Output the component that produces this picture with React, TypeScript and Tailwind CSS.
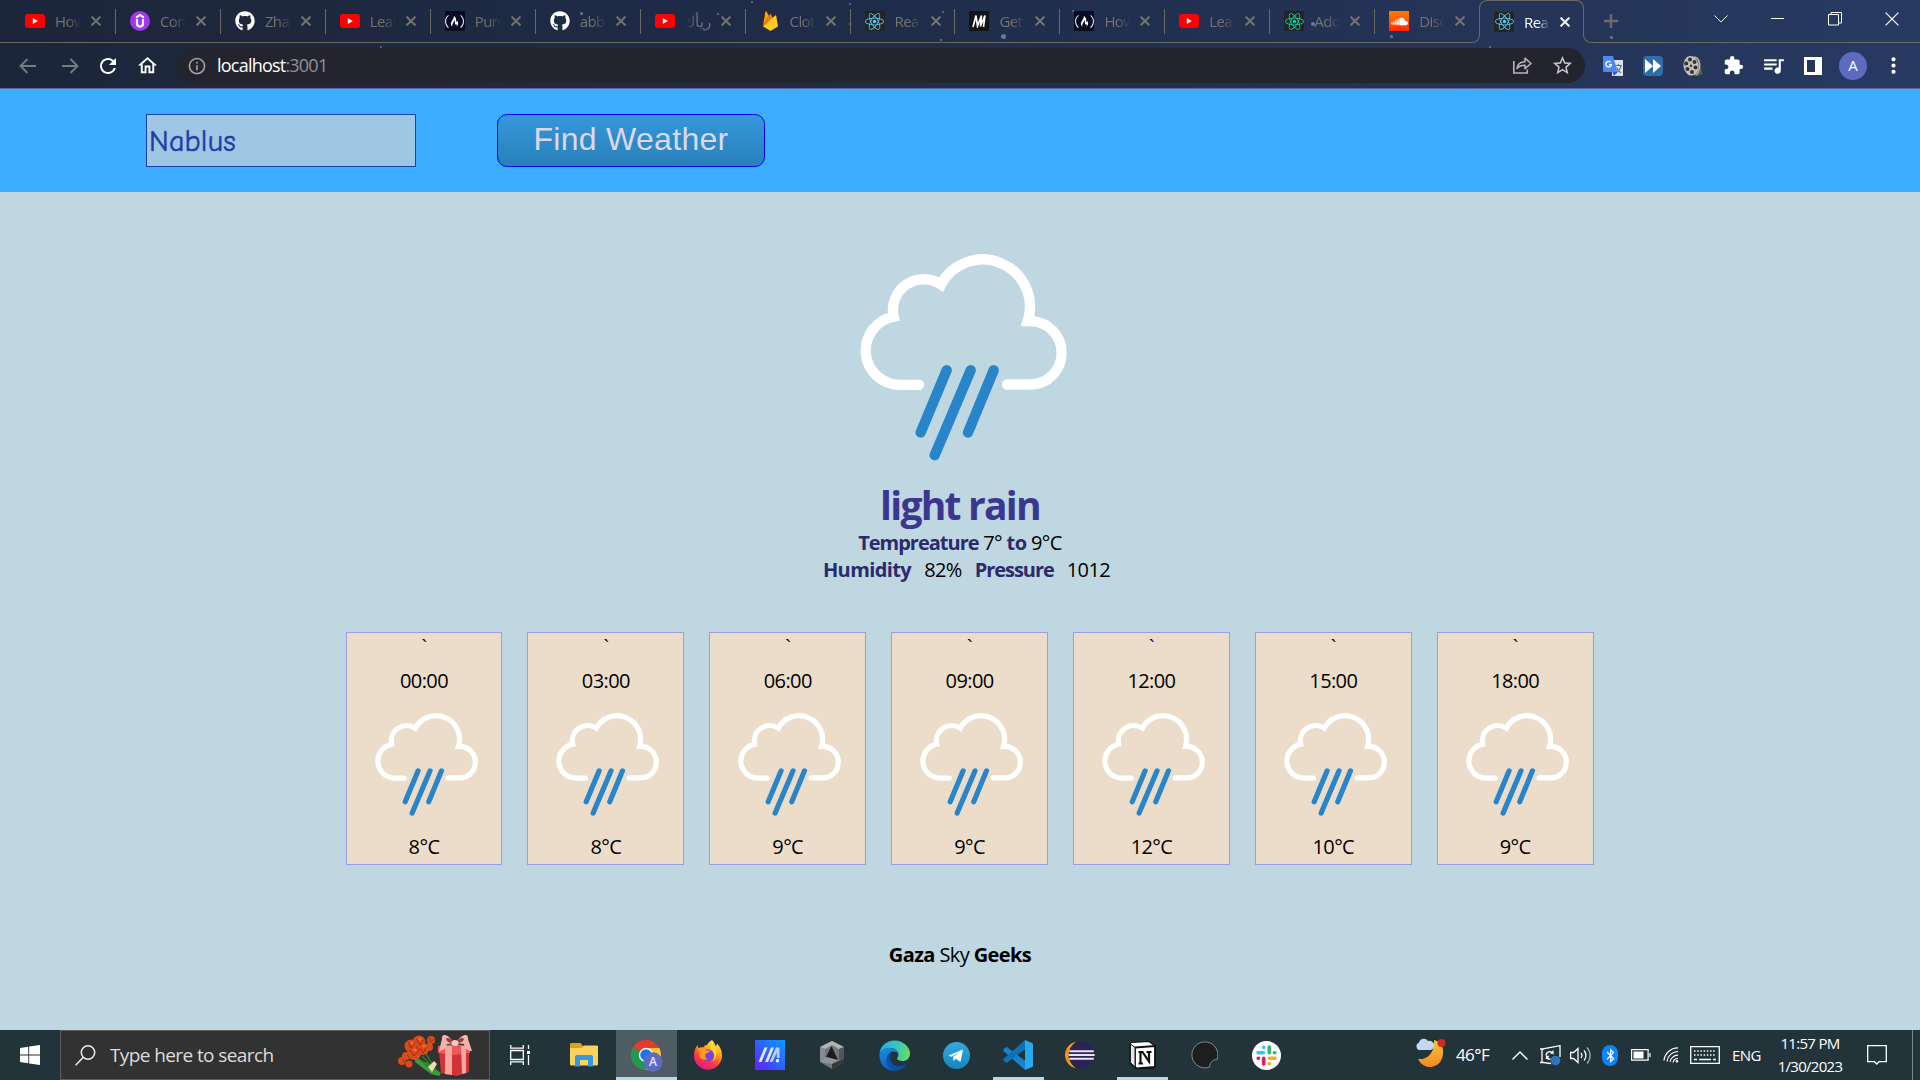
import React from "react";
import { FaGithub, FaReact, FaSoundcloud, FaFreeCodeCamp, FaBluetoothB } from "react-icons/fa";
import { MdRefresh, MdOutlineHome, MdExtension, MdQueueMusic, MdStarBorder, MdMoreVert, MdInfoOutline } from "react-icons/md";

const YouTube = () => (
  <svg width="20" height="20" viewBox="0 0 20 20">
    <rect x="0" y="3" width="20" height="14" rx="3.2" fill="#ff0000" />
    <path d="M7.8 7v6l5-3z" fill="#fff" />
  </svg>
);

const Udemy = () => (
  <span className="flex h-5 w-5 items-center justify-center rounded-full bg-[#a435f0]">
    <svg width="12" height="16" viewBox="0 0 12 16" fill="none" stroke="#fff">
      <path d="M2 4.6L6 2l4 2.6" strokeWidth="1.9" />
      <path d="M3 6v4.6a3 3 0 0 0 6 0V6" strokeWidth="2.2" />
    </svg>
  </span>
);

const GitHub = () => <FaGithub size={20} color="#fff" />;

const FreeCode = () => (
  <span className="flex h-5 w-5 items-center justify-center bg-[#0a0a23]">
    <FaFreeCodeCamp size={19} color="#fff" />
  </span>
);

const Firebase = () => (
  <svg width="20" height="20" viewBox="0 0 20 20">
    <path d="M3 15.500L5.300.7c.1-.6.800-.7 1.100-.2L9 5z" fill="#ffa000" />
    <path d="M3 15.500L10 3.200c.2-.4.700-.4 1 0l2 4z" fill="#f57c00" />
    <path d="M3 15.500L15.200 4.500c.3-.3.900-.1 1 .3L18 15.600l-6.600 3.800c-.5.300-1.100.3-1.600 0z" fill="#ffca28" />
  </svg>
);

const ReactTile = ({ green }: { green?: boolean }) => (
  <span className="flex h-5 w-5 items-center justify-center bg-[#222427]">
    <FaReact size={19} color={green ? "#14d09c" : "#61c9e6"} />
  </span>
);

const Mui = () => (
  <span className="flex h-5 w-5 items-center justify-center bg-[#141416]">
    <svg width="16" height="14" viewBox="0 0 16 14" fill="none" stroke="#fff" strokeWidth="1.700">
      <path d="M2 13L5 1.500 6.500 12 10.500 1.500 9.500 12.500M9.500 12L14 1.500 12.500 13" />
    </svg>
  </span>
);

const SoundCloud = () => (
  <span className="flex h-5 w-5 items-center justify-center bg-gradient-to-b from-[#ff7a00] to-[#ff2200]">
    <FaSoundcloud size={17} color="#fff" />
  </span>
);

const tabs: { icon: React.ReactNode; title: string; rtl?: boolean }[] = [
  { icon: <YouTube />, title: "How" },
  { icon: <Udemy />, title: "Com" },
  { icon: <GitHub />, title: "Zha" },
  { icon: <YouTube />, title: "Lear" },
  { icon: <FreeCode />, title: "Pure" },
  { icon: <GitHub />, title: "abb" },
  { icon: <YouTube />, title: "ريأك", rtl: true },
  { icon: <Firebase />, title: "Clot" },
  { icon: <ReactTile />, title: "Rea" },
  { icon: <Mui />, title: "Gett" },
  { icon: <FreeCode />, title: "How" },
  { icon: <YouTube />, title: "Lear" },
  { icon: <ReactTile green />, title: "Add" },
  { icon: <SoundCloud />, title: "Disc" },
];

const Cross = ({ color, w = 10, sw = 2 }: { color: string; w?: number; sw?: number }) => (
  <svg width={w} height={w} viewBox={`0 0 ${w} ${w}`} stroke={color} strokeWidth={sw}>
    <path d={`M.6 .6L${w - 0.6} ${w - 0.6}M${w - 0.6} .6L.6 ${w - 0.6}`} />
  </svg>
);

function TabBody({ icon, title, rtl, active }: { icon: React.ReactNode; title: string; rtl?: boolean; active?: boolean }) {
  return (
    <>
      <span className="h-5 w-5 shrink-0">{icon}</span>
      <span
        dir={rtl ? "rtl" : "ltr"}
        className={
          "ml-2.5 h-6 w-[26px] shrink-0 overflow-hidden whitespace-nowrap text-[15px] leading-6 tracking-[-0.6px] " +
          (rtl
            ? "[mask-image:linear-gradient(to_left,black_50%,transparent)] "
            : "[mask-image:linear-gradient(to_right,black_50%,transparent)] ") +
          (active ? "text-white" : "text-[#75736f]")
        }
      >
        {title}
      </span>
      <span className="ml-[9px] flex w-3 shrink-0 items-center justify-center">
        <Cross color={active ? "#f2f2f2" : "#75736f"} />
      </span>
    </>
  );
}

const stars = [
  [581, 13, 3], [752, 2, 2], [850, 4, 2], [943, 12, 2], [1003, 36, 5], [941, 40, 2], [1313, 24, 4], [1391, 36, 3],
  [1611, 37, 3], [718, 14, 2], [1073, 11, 2], [381, 47, 2], [1490, 47, 2], [850, 24, 2],
];

function Browser() {
  return (
    <div className="relative h-[89px] shrink-0 bg-gradient-to-r from-[#1c263a] via-[#202d4b] to-[#283a62]">
      {stars.map(([x, y, s], i) => (
        <span key={i} className="absolute rounded-full bg-[#8fa6da] opacity-60" style={{ left: x - s / 2, top: y - s / 2, width: s, height: s }} />
      ))}
      <div className="relative flex h-[43px]">
        <div className="flex w-[1472px] shrink-0 border-b border-[#6b6963]">
          {tabs.map((t, i) => (
            <div key={i} className="relative flex h-[42px] w-[104.95px] shrink-0 items-center pl-[25px]">
              <TabBody {...t} />
              {i < 13 && <span className="absolute -right-[11px] top-[9px] h-[25px] w-px bg-[#6b6963]" />}
            </div>
          ))}
        </div>
        <div className="h-2 w-2 shrink-0 self-end rounded-br-lg border-b border-r border-[#6b6963]" />
        <div className="-ml-px mb-2 flex w-[105px] shrink-0 items-center rounded-t-lg border-x border-t border-[#6b6963] pl-[14px] pt-[7px]">
          <TabBody icon={<ReactTile />} title="Rea" active />
        </div>
        <div className="-ml-px h-2 w-2 shrink-0 self-end rounded-bl-lg border-b border-l border-[#6b6963]" />
        <div className="flex flex-1 border-b border-[#6b6963]">
          <svg width="14" height="14" viewBox="0 0 14 14" className="ml-[13px] mt-[14px] shrink-0" stroke="#6e6b66" strokeWidth="2.400">
            <path d="M7 0v14M0 7h14" />
          </svg>
          <div className="ml-auto flex h-[37px] items-center text-white">
            <span className="flex w-[57px] justify-center">
              <svg width="14" height="8" viewBox="0 0 14 8" fill="none" stroke="#fff"><path d="M.5.5L7 7 13.500.5" /></svg>
            </span>
            <span className="flex w-[57px] justify-center"><span className="h-px w-[13px] bg-white" /></span>
            <span className="flex w-[57px] justify-center">
              <svg width="14" height="14" viewBox="0 0 14 14" fill="none" stroke="#fff">
                <path d="M.5 2.500h10v10.500H.5zM3 2.500V.5h10.500V11h-3" />
              </svg>
            </span>
            <span className="flex w-[57px] justify-center"><Cross color="#fff" w={14} sw={1.2} /></span>
          </div>
        </div>
      </div>
      <div className="relative flex h-[45px] items-center pl-[18px] text-white">
        <span className="flex w-10 pl-px text-[#777c87]"><Arrow /></span>
        <span className="flex w-10 rotate-180 justify-end pr-[4px] text-[#777c87]"><Arrow /></span>
        <span className="flex w-10 justify-start"><MdRefresh size={24} className="-ml-0.5" /></span>
        <span className="flex w-[38px]"><MdOutlineHome size={23} className="-ml-0.5" /></span>
        <div className="flex h-[35px] w-[1409px] items-center rounded-full bg-[#24242e] pl-[11px]">
          <MdInfoOutline size={20} color="#a0a0a4" />
          <span className="-mt-0.5 ml-2.5 text-[18px] leading-6 tracking-[-0.78px]">localhost<span className="text-[#919196]">:3001</span></span>
          <svg width="19" height="17" viewBox="0 0 19 17" fill="none" stroke="#b5b5b8" strokeWidth="1.600" className="ml-auto mr-[19px]">
            <path d="M.8 4v12h13.500v-3.500" />
            <path d="M4 11.500C4.500 7 7.500 4.800 12 4.700V1.200l6 5.300-6 5.200V8.300C8.500 8.200 6 9.200 4 11.500z" strokeLinejoin="round" />
          </svg>
          <MdStarBorder size={23} color="#c6c6c8" className="mr-[11px]" />
        </div>
        <div className="ml-[8px] flex">
          <Cell>
            <svg width="22" height="22" viewBox="0 0 22 22">
              <rect x="10" y="5" width="11" height="16" fill="#dfe3e8" />
              <path d="M13 10.500h7M16.500 9v1.500M14 18c3-2 4.500-4.500 4.800-7.500M14.500 12.500c1 2.500 2.500 4.300 4.500 5.500" stroke="#5c7480" strokeWidth="1.200" fill="none" />
              <path d="M1 1h10l4.500 16H1.500A1 1 0 0 1 1 16z" fill="#4a8af4" />
              <path d="M10.500 17h5l-3.500 4z" fill="#3056c9" />
              <path d="M8.800 7.400a2.800 2.800 0 1 0 .6 2.200H7" stroke="#fff" strokeWidth="1.300" fill="none" />
            </svg>
          </Cell>
          <Cell>
            <span className="flex h-5 w-5 items-center justify-center rounded-sm bg-[#2e6da6]">
              <svg width="16" height="14" viewBox="0 0 16 14" fill="#fff"><path d="M0 0l8 7-8 7zM8 0l8 7-8 7z" /></svg>
            </span>
          </Cell>
          <Cell>
            <svg width="22" height="22" viewBox="0 0 22 22">
              <path d="M11 1c6 0 8 4 8 10 0 4 1 7 2 8l-6 2-5-1z" fill="#5b5956" />
              <path d="M12 2c4 1 6 5 5.500 10-.3 4-1.500 7-4 8" stroke="#b4b1ac" strokeWidth="1.500" fill="none" />
              <ellipse cx="9" cy="10.800" rx="7.500" ry="9.800" fill="#c2c0bc" transform="rotate(-8 9 10.800)" />
              <g fill="#35322f"><circle cx="8" cy="4.500" r="2" /><circle cx="4.200" cy="8.500" r="2" /><circle cx="12.500" cy="7" r="2" /><circle cx="5.500" cy="14" r="2" /><circle cx="10" cy="17" r="2" /><circle cx="13.500" cy="12.500" r="2" /><circle cx="9" cy="10.800" r="1.200" /></g>
            </svg>
          </Cell>
          <Cell><MdExtension size={21} /></Cell>
          <Cell><MdQueueMusic size={25} /></Cell>
          <Cell>
            <span className="flex h-[18px] w-[18px] justify-end bg-white p-[3px]"><span className="mr-1 h-3 w-2 bg-[#26365b]" /></span>
          </Cell>
          <Cell>
            <span className="flex h-7 w-7 shrink-0 items-center justify-center rounded-full bg-[#5c6bc0] text-[15px]">A</span>
          </Cell>
          <Cell><MdMoreVert size={25} /></Cell>
        </div>
      </div>
      <div className="relative h-px bg-[#5a6498]" />
    </div>
  );
}

const Arrow = () => (
  <svg width="17" height="16" viewBox="0 0 17 16" fill="none" stroke="currentColor" strokeWidth="1.800">
    <path d="M17 8H1.500M8.500 1L1.500 8l7 7" />
  </svg>
);

const Cell = ({ children }: { children: React.ReactNode }) => <span className="flex h-[45px] w-10 items-center justify-center">{children}</span>;

const RainCloud = ({ className }: { className: string }) => (
  <svg viewBox="180 73 621 620" className={className} fill="none" strokeWidth="31" strokeLinecap="round">
    <path d="M357 465H300A103 103 0 0 1 281 260.800A92.500 92.500 0 0 1 423 164A141.700 141.700 0 0 1 683 274H690A95 95 0 0 1 690 464H621" stroke="#fff" strokeMiterlimit="6" />
    <path d="M440 421L362 608M512 421L404 676M581 421L504 608" stroke="#2885ca" />
  </svg>
);

const hours = [
  ["00:00", "8"], ["03:00", "8"], ["06:00", "9"], ["09:00", "9"], ["12:00", "12"], ["15:00", "10"], ["18:00", "9"],
];

function WeatherPage() {
  return (
    <main className="flex h-[941px] shrink-0 flex-col bg-[#bed7e0]">
      <header className="flex h-[103px] shrink-0 items-start bg-[#3daeff] pl-[146px] pt-[25px]">
        <div className="h-[53px] w-[270px] border border-[#1c3faa] bg-[#9fc6e3] pl-[2px] font-['Comic_Sans_MS','Comic_Neue',Lato,sans-serif] text-[30px] leading-[53px] tracking-[0.2px] text-[#1c3faa] [-webkit-text-stroke:0.5px_#1c3faa]">
          Nablus
        </div>
        <button className="ml-[81px] h-[53px] w-[268px] rounded-[10px] border border-[#0000ff] bg-gradient-to-b from-[#3498db] to-[#2980b9] pb-1 text-center font-['Liberation_Sans',Arial,sans-serif] text-[32px] leading-[46px] tracking-[0.3px] text-[#dcd8e8]">
          Find Weather
        </button>
      </header>
      <section className="flex flex-col items-center text-[20px] leading-[27px] text-black">
        <RainCloud className="ml-[7px] mt-[62px] h-[207px] w-[207px]" />
        <h1 className="-mb-[3px] mt-[17px] text-[39px] font-bold leading-[54px] tracking-[-1.75px] text-[#3b3791]">light rain</h1>
        <p className="tracking-[-0.6px]">
          <b className="tracking-[-1px] text-[#2c2a6b]">Tempreature</b>&nbsp;7° <b className="text-[#2c2a6b]">to</b> 9°C
        </p>
        <p className="ml-[13px] flex tracking-[-0.6px]">
          <b className="text-[#2c2a6b]">Humidity</b>
          <span className="ml-[13px]">82%</span>
          <b className="ml-[13px] tracking-[-1.05px] text-[#2c2a6b]">Pressure</b>
          <span className="ml-[13px]">1012</span>
        </p>
      </section>
      <section className="ml-[345.6px] mt-[49px] grid w-[1248px] grid-cols-7 gap-[25px]">
        {hours.map(([time, temp]) => (
          <article key={time} className="flex h-[233px] flex-col items-center border border-[#9f9bdd] bg-[#ebddc9] text-[20px] leading-[27px] tracking-[-0.6px] text-black">
            <span className="h-[34px] leading-[27px]">`</span>
            <span>{time}</span>
            <RainCloud className="ml-[4px] mt-[19px] h-[103px] w-[103px]" />
            <span className="mt-[17px]">{temp}°C</span>
          </article>
        ))}
      </section>
      <footer className="mt-[76px] text-center text-[20px] leading-[27px] tracking-[-0.6px] text-black">
        <b>Gaza</b> Sky <b>Geeks</b>
      </footer>
    </main>
  );
}

const Flowers = () => (
  <svg width="75" height="42" viewBox="0 0 75 42">
    <path d="M17 23l12 6 14 10-2 3-8-2-16-12z" fill="#3f9c3b" />
    <path d="M20 24l14 12M24 22l13 14M28 20l10 16" stroke="#2c7a2a" strokeWidth="1.500" />
    <path d="M30 33l6-6 3 3-5 8z" fill="#e9dcae" />
    <g fill="#d94a1c">
      <circle cx="13" cy="12" r="6.500" /><circle cx="21" cy="8" r="6.500" /><circle cx="25" cy="15" r="6" /><circle cx="16" cy="19" r="7" />
      <circle cx="33" cy="6" r="4" /><circle cx="31" cy="13" r="4" /><circle cx="4" cy="27" r="4" /><circle cx="11" cy="30" r="3.500" /><circle cx="8" cy="22" r="4" />
    </g>
    <g stroke="#a62c0e" strokeWidth="1" fill="none">
      <path d="M10 8l3 6 4-5M18 5l4 6 3-5M12 16l4 6 5-6M22 14l3 5 3-5M31 4l2 4 3-3M5 25l2 4M9 21l3 3M18 12l3 4" />
    </g>
    <g fill="#f0733f"><circle cx="14" cy="9" r="1.500" /><circle cx="22" cy="5" r="1.500" /><circle cx="17" cy="16" r="1.500" /><circle cx="26" cy="12" r="1.300" /></g>
    <path d="M41 17l10 2h16l4-2v21l-12 4-16-3z" fill="#d33238" />
    <path d="M40 12l16-2 16 2v7l-16 2-16-2z" fill="#ea5a58" />
    <path d="M47 12h7v29l-7-1zM63 12h5v27l-4 1z" fill="#f7a5a0" />
    <path d="M56 9C50-1 43-1 44 5l-3 12c3 0 7-2 8-7zM58 9C64-1 71-1 70 5l4 12c-4 0-7-2-8-7z" fill="#f6b2ac" />
    <path d="M56 9c-3-5-7-6-8-4 1 3 4 4 8 4zM58 9c3-5 7-6 8-4-1 3-4 4-8 4z" fill="#93413d" />
    <ellipse cx="57" cy="9" rx="3.500" ry="3" fill="#fac7c2" />
  </svg>
);

const Chrome = () => (
  <svg width="32" height="32" viewBox="0 0 32 32">
    <circle cx="15" cy="15" r="15" fill="#e33b2e" />
    <path d="M15 15L2 7.500A15 15 0 0 0 15 30l6.500-11.300z" fill="#239a4a" />
    <path d="M15 8h13.300A15 15 0 0 1 15 30l6.500-11.300z" fill="#fcc934" />
    <circle cx="15" cy="15" r="7.200" fill="#fff" />
    <circle cx="15" cy="15" r="5.800" fill="#1a73e8" />
    <circle cx="22" cy="22" r="9.700" fill="#5c6bc0" />
    <text x="22" y="26.300" fontSize="12" fontWeight="600" fill="#e5e8fa" textAnchor="middle">A</text>
  </svg>
);

const Firefox = () => (
  <svg width="28" height="30" viewBox="0 0 28 30">
    <defs>
      <linearGradient id="ffx" x1=".8" y1="0" x2=".3" y2="1">
        <stop offset="0" stopColor="#fff44f" /><stop offset=".4" stopColor="#ff980e" /><stop offset=".7" stopColor="#ff3647" /><stop offset="1" stopColor="#e31587" />
      </linearGradient>
    </defs>
    <path d="M18 0c2 2 3 4 3.500 6 1-.5 1.500-1.500 1.500-2.500 3 3 5 7 5 12A14 14 0 0 1 0 16C0 12 1 8 3.500 5L4.500 8c1.500-1 3-1 4.500-.6C10.500 5.500 12 5 13 5c1-2 3-4 5-5z" fill="url(#ffx)" />
    <circle cx="14" cy="15.500" r="6" fill="#7a44e0" />
    <path d="M4 9c3-1 6 0 8 1.500h4c0 2-3 2-4 3-1.500 1.500-1 5 2 5.500-5 2-10-1-9-6z" fill="#ff9a1f" />
    <path d="M18 3c4 4 5.500 8 4 13-.5 3-2 4.500-3 5 2.500-5 1.500-9-1.500-11C16 8.500 16 5.500 18 3z" fill="#ffd63a" />
  </svg>
);

const MyAsus = () => (
  <svg width="30" height="30" viewBox="0 0 30 30">
    <defs><linearGradient id="asus" x1="1" y1="0" x2="0" y2="1"><stop offset="0" stopColor="#0a9bff" /><stop offset=".5" stopColor="#2c62ff" /><stop offset="1" stopColor="#6a1cff" /></linearGradient></defs>
    <path d="M0 0h30v30H0z" fill="url(#asus)" />
    <path d="M9.500 7.500h3L6.500 22h-3zM16 7.500h3L13 22h-3z" fill="#dfe9ff" />
    <path d="M21 7.500h3.500V18h-2.700v-5.500L17.500 22h-3z" fill="#b8ccff" /><circle cx="22.500" cy="20.700" r="1.700" fill="#fff" />
  </svg>
);

const Armoury = () => (
  <svg width="26" height="28" viewBox="0 0 26 28">
    <path d="M13 0l12 6v15l-12 7L1 21V6z" fill="#71777b" />
    <path d="M13 0l12 6-5 2-7-4-7 4-5-2z" fill="#aeb4b8" />
    <path d="M1 6l5 2v10l-5 3z" fill="#858b90" /><path d="M25 6l-5 2v10l5 3z" fill="#50565a" />
    <path d="M12.500 5l6.500 14-12-3z" fill="#191d20" /><path d="M7 16l12 3-6 4-12-2z" fill="#8f969a" /><path d="M13 28v-5l12-5v3z" fill="#34393c" />
  </svg>
);

const Edge = () => (
  <svg width="31" height="31" viewBox="0 0 31 31">
    <defs>
      <linearGradient id="eg1" x1="0" y1=".3" x2="1" y2=".4"><stop offset="0" stopColor="#29a9e4" /><stop offset=".6" stopColor="#38c7b8" /><stop offset="1" stopColor="#6bde56" /></linearGradient>
      <linearGradient id="eg2" x1="0" y1="0" x2=".3" y2="1"><stop offset="0" stopColor="#1a90dd" /><stop offset="1" stopColor="#0f5dbd" /></linearGradient>
    </defs>
    <path d="M.5 14C1 6 7.500.5 15.500.5 24 .5 31 7 31 13.500c0 5-3.500 7.500-7.500 7.500-3 0-5.500-1-5.500-2.500 0-1 1.500-1.500 1.500-4C19.500 11 16 8 11 8 6 8 1.500 10.500.5 14z" fill="url(#eg1)" />
    <path d="M.5 14C1.500 10.500 5.500 8 10.500 8c5 0 9 3 9 6.500-1-2-3-3-5-3-4 0-6 4-6 8 0 5 4 9 8.500 11C8 32 0 25 .5 14z" fill="url(#eg2)" />
    <path d="M12 13c-2.500 5 0 13 8 13 3.500 0 6-1 8-2.500C26 28 21 31 16 30.500 9 29 6 23 8 17c1-2.500 2.500-3.500 4-4z" fill="#0c4fa5" />
  </svg>
);

const Telegram = () => (
  <svg width="27" height="27" viewBox="0 0 27 27">
    <defs><linearGradient id="tg" x1="0" y1="0" x2="0" y2="1"><stop offset="0" stopColor="#34aadf" /><stop offset="1" stopColor="#1586bf" /></linearGradient></defs>
    <circle cx="13.500" cy="13.500" r="13.500" fill="url(#tg)" />
    <path d="M5.500 13.500L20 7.500l-2.500 12.500-4.500-3.300-2.300 2.300-.7-4L17 9.800 8.500 14.800z" fill="#fff" />
  </svg>
);

const VsCode = () => (
  <svg width="30" height="30" viewBox="0 0 30 30">
    <path d="M.7 9.300L2.500 7.600c.6-.5 1.300-.5 2 0L22 20.800V30L1 11.500C0 10.700 0 10 .7 9.300z" fill="#1583cf" />
    <path d="M22 0v9.200L4.500 22.400c-.7.500-1.400.5-2 0L.7 20.700C0 20 0 19.300 1 18.500z" fill="#0f70b5" />
    <path d="M22 0l7 3c.6.300 1 .8 1 1.500v21c0 .7-.4 1.200-1 1.500l-7 3z" fill="#29a8ee" />
  </svg>
);

const Eclipse = () => (
  <svg width="30" height="28" viewBox="0 0 30 28">
    <path d="M11 .5C4 2.500 0 8 0 14s4 11.500 11 13.500C6.500 24 4 19 4 14S6.500 4 11 .5z" fill="#f0951c" />
    <circle cx="16.500" cy="14" r="13" fill="#2c2255" />
    <path d="M4.300 10.200h24.500M3.600 14h26M4.300 17.800h24.500" stroke="#e8e5f2" strokeWidth="2" />
  </svg>
);

const Notion = () => (
  <svg width="27" height="28" viewBox="0 0 27 28">
    <path d="M3 1.500L20 .5l6 4.500v20.500c0 1-.5 1.500-1.500 1.600L7 28l-6-6V3.500c0-1.300.7-1.900 2-2z" fill="#fff" stroke="#111" strokeWidth="1.200" />
    <path d="M6 6.500L26 5v21L7.500 27.500 6 26z" fill="#fff" stroke="#111" strokeWidth="1.800" />
    <path d="M1.500 3L6 6.500V26l-4.500-4.500z" fill="#e8e8e8" stroke="#222" />
    <path d="M9.500 11h4l6.500 9.500V12M11.500 12v10.500M9.500 22.500h4.500M17.500 11h5" stroke="#111" strokeWidth="2.200" fill="none" />
  </svg>
);

const DarkOrb = () => (
  <svg width="28" height="28" viewBox="0 0 28 28">
    <path d="M19.500 26A13 13 0 1 1 27 18.500c-4.500 0-7 3-7.500 7.500z" fill="#1c1e20" stroke="#85898b" strokeWidth="1" />
  </svg>
);

const Slack = () => (
  <svg width="29" height="29" viewBox="0 0 29 29">
    <circle cx="14.500" cy="14.500" r="14.500" fill="#fff" />
    <g strokeWidth="3.600" strokeLinecap="round">
      <path d="M6 11.700h5.500M11.700 6.200v.3" stroke="#36c5f0" />
      <path d="M17.300 6v5.700M22.800 11.700h-.3" stroke="#2eb67d" />
      <path d="M23 17.300h-5.700M17.300 22.800v-.3" stroke="#ecb22e" />
      <path d="M11.700 23v-5.700M6.200 17.300h.3" stroke="#e01e5a" />
    </g>
  </svg>
);

const Explorer = () => (
  <svg width="28" height="24" viewBox="0 0 28 24">
    <path d="M0 1.500C0 .7.500 0 1.500 0h9l2.500 3H28v6H0z" fill="#e0a11a" />
    <path d="M0 5h12l2-2.500h12.500c.8 0 1.500.5 1.500 1.500v17c0 .8-.5 1.500-1.500 1.500h-25C.7 22.500 0 22 0 21z" fill="#fbd35c" />
    <path d="M5 23.500V14c0-1.200.8-2 2-2h14c1.200 0 2 .8 2 2v9.500h-5V17h-8v6.500z" fill="#3b97dd" />
  </svg>
);

const apps: { icon: React.ReactNode; open?: boolean }[] = [
  { icon: <Firefox /> }, { icon: <MyAsus /> }, { icon: <Armoury /> }, { icon: <Edge /> }, { icon: <Telegram /> },
  { icon: <VsCode />, open: true }, { icon: <Eclipse /> }, { icon: <Notion />, open: true }, { icon: <DarkOrb /> }, { icon: <Slack /> },
];

function Taskbar() {
  return (
    <div className="flex h-[50px] shrink-0 items-stretch bg-[#22333a] text-white">
      <div className="flex w-[60px] items-center justify-center">
        <svg width="20" height="20" viewBox="0 0 20 20" fill="#fff">
          <path d="M0 3l8.300-1.200v7.700H0zM9.200 1.600L20 0v9.500H9.200zM0 10.400h8.300v7.800L0 17zM9.200 10.400H20V20L9.200 18.400z" />
        </svg>
      </div>
      <div className="flex w-[430px] items-center border border-[#5e5e5e] bg-[#323232]">
        <svg width="21" height="21" viewBox="0 0 21 21" fill="none" stroke="#f0f0f0" strokeWidth="1.500" className="ml-[14px]">
          <circle cx="13" cy="7.500" r="6.700" /><path d="M8.300 12.300L.6 20.300" />
        </svg>
        <span className="ml-[14px] text-[19px] leading-6 tracking-[-0.6px] text-[#dcdcdc]">Type here to search</span>
        <span className="ml-auto mr-[16px]"><Flowers /></span>
      </div>
      <div className="flex w-[60px] items-center justify-center">
        <svg width="20" height="20" viewBox="0 0 20 20" fill="none" stroke="#fff" strokeWidth="1.300">
          <path d="M.7 0v3.200h12.600V0M.7 20v-3.200h12.600V20M.7 5.500h12.600v9H.7zM18.500 0v4M18.500 10v10" />
          <path d="M17 6h3v3h-3z" fill="#fff" stroke="none" />
        </svg>
      </div>
      <div className="flex w-[66px] items-center justify-center pl-0.5"><Explorer /></div>
      <div className="flex w-[61px] items-center justify-center border-b-[3px] border-[#b9d8e4] bg-[#4e5d63]"><span className="pt-1"><Chrome /></span></div>
      {apps.map((a, i) => (
        <div key={i} className="flex w-[62px] shrink-0 flex-col items-center">
          <span className="flex h-[47px] items-center pt-[3px]">{a.icon}</span>
          {a.open && <span className="h-[3px] w-[51px] bg-[#b9d8e4]" />}
        </div>
      ))}
      <div className="ml-auto flex w-[505px] items-center">
        <svg width="31" height="30" viewBox="0 0 31 30" className="-mt-1">
          <defs><linearGradient id="moon" x1="0" y1="0" x2="0" y2="1"><stop offset="0" stopColor="#fbc53c" /><stop offset="1" stopColor="#f08a24" /></linearGradient></defs>
          <path d="M19 2c7 2 10 8 9 14A13 13 0 0 1 3 21c9 1 17-6 16-19z" fill="url(#moon)" />
          <path d="M4 12a4 4 0 0 1 0-7.500A5 5 0 0 1 13 3a4.500 4.500 0 0 1 3 9z" fill="#c3d8f7" />
          <circle cx="26.500" cy="5" r="4" fill="#cf2a24" />
        </svg>
        <span className="ml-[10px] w-[37px] whitespace-nowrap text-[17px] tracking-[-0.6px]">46°F</span>
        <svg width="16" height="9" viewBox="0 0 16 9" fill="none" stroke="#fff" strokeWidth="1.400" className="ml-[19px]"><path d="M.5 8.500L8 1l7.500 7.500" /></svg>
        <svg width="21" height="21" viewBox="0 0 21 21" fill="none" stroke="#fff" strokeWidth="1.300" className="ml-[12px]">
          <path d="M11 18.500l-9-1V4l18-3.300V12M0 4h4M0 17.500h4" />
          <path d="M6 10.500a4 4 0 0 1 7-2.500V5.500M13 8h-2.500M6.500 11.500a3.500 3.500 0 0 0 4 2.500M9 11.500H6.500V14" />
          <circle cx="15.500" cy="15.500" r="4.800" fill="#2f74c0" stroke="none" />
        </svg>
        <svg width="21" height="19" viewBox="0 0 21 19" fill="none" stroke="#fff" strokeWidth="1.300" className="ml-[9px]">
          <path d="M.6 6.500h3L8 2.500v14l-4.400-4h-3z" />
          <path d="M11 7a4 4 0 0 1 0 5M14 4.500a7.500 7.500 0 0 1 0 10" /><path d="M17 1.500a12 12 0 0 1 0 16" stroke="#a5adb0" />
        </svg>
        <span className="ml-[11px] flex h-[21px] w-4 items-center justify-center rounded-[8px] bg-[#0a84ff]"><FaBluetoothB size={15} /></span>
        <svg width="20" height="12" viewBox="0 0 20 12" fill="none" stroke="#fff" strokeWidth="1.200" className="ml-[13px]">
          <path d="M.6.600h16.500v10.500H.6zM19 4v4" /><path d="M2.500 2.500h10v7h-10z" fill="#fff" stroke="none" />
        </svg>
        <svg width="16" height="16" viewBox="0 0 16 16" fill="none" stroke="#fff" strokeWidth="1.200" className="ml-[12px]">
          <path d="M1 13.500A14 14 0 0 1 15 .8M4 14.500A11 11 0 0 1 15 4.500M7 15A8 8 0 0 1 15 8.200M10 15.500a5 5 0 0 1 5-4" /><circle cx="14" cy="14.300" r="1.300" fill="#fff" stroke="none" />
        </svg>
        <svg width="30" height="18" viewBox="0 0 30 18" fill="none" stroke="#fff" strokeWidth="1.300" className="ml-[11px]">
          <path d="M.7.700h28.600v16.600H.7z" />
          <path d="M4 5h22M4 9h22" strokeDasharray="1.500 1.700" /><path d="M4 13.500h3M9 13.500h12M23 13.500h3" />
        </svg>
        <span className="ml-[12px] w-[30px] text-[15px] tracking-[-0.6px]">ENG</span>
        <span className="ml-[13px] flex w-[70px] flex-col text-center text-[15px] leading-[23px] tracking-[-0.7px]">
          <span className="whitespace-nowrap">11:57 PM</span>
          <span className="whitespace-nowrap">1/30/2023</span>
        </span>
        <svg width="20" height="20" viewBox="0 0 20 20" fill="none" stroke="#fff" strokeWidth="1.300" className="ml-[22px]">
          <path d="M.7.700h18.600v16H12L9.800 19l-2.300-2.300H.7z" />
        </svg>
        <span className="ml-[25px] h-[50px] w-px bg-[#7b868a]" />
      </div>
    </div>
  );
}

export default function App() {
  return (
    <div className="flex h-[1080px] w-[1920px] flex-col overflow-hidden font-['Segoe_UI','Open_Sans','Noto_Sans',sans-serif]">
      <Browser />
      <WeatherPage />
      <Taskbar />
    </div>
  );
}
